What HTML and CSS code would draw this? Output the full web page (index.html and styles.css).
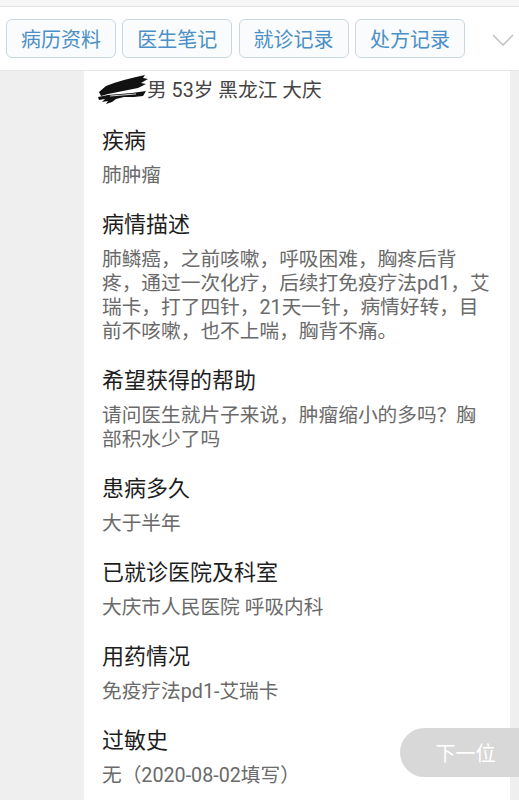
FILE: index.html
```html
<!DOCTYPE html>
<html lang="zh-CN">
<head>
<meta charset="utf-8">
<title>病历资料</title>
<link rel="stylesheet" href="styles.css">
</head>
<body>
<div class="topstrip"></div>
<nav class="tabs">
  <button class="tab">病历资料</button>
  <button class="tab">医生笔记</button>
  <button class="tab">就诊记录</button>
  <button class="tab">处方记录</button>
  <svg class="chev" width="22" height="12" viewBox="0 0 22 12"><polyline points="1,1 11,11 21,1" fill="none" stroke="#bdbdbd" stroke-width="1.4"/></svg>
</nav>
<main class="main">
  <section class="card">
    <div class="info"><svg class="scribble" width="52" height="30" viewBox="0 0 52 30"><path d="M3 17 L10 11 L18 8 L28 5 L40 2 L49 0 L47 3 L52 4 L45 8 L50 9 L42 13 L32 15 L22 17 L12 19 L5 21 Z" fill="#111"/><path d="M2 22 L12 20 L24 19 L36 18 L50 16 L47 21 L38 22 L28 22 L20 24 L16 27 L10 29 L12 26 L6 27 L9 24 L3 25 Z" fill="#111"/><path d="M14 21 L40 19" stroke="#fff" stroke-width="0.8"/></svg>男 53岁 黑龙江 大庆</div>

    <h2 class="label">疾病</h2>
    <p class="value">肺肿瘤</p>

    <h2 class="label">病情描述</h2>
    <p class="value">肺鳞癌，之前咳嗽，呼吸困难，胸疼后背疼，通过一次化疗，后续打免疫疗法pd1，艾瑞卡，打了四针，21天一针，病情好转，目前不咳嗽，也不上喘，胸背不痛。</p>

    <h2 class="label">希望获得的帮助</h2>
    <p class="value">请问医生就片子来说，肿瘤缩小的多吗？胸部积水少了吗</p>

    <h2 class="label">患病多久</h2>
    <p class="value">大于半年</p>

    <h2 class="label">已就诊医院及科室</h2>
    <p class="value">大庆市人民医院 呼吸内科</p>

    <h2 class="label">用药情况</h2>
    <p class="value">免疫疗法pd1-艾瑞卡</p>

    <h2 class="label">过敏史</h2>
    <p class="value">无（2020-08-02填写）</p>
  </section>
</main>
<button class="next">下一位</button>
</body>
</html>
```
FILE: styles.css
```css
* { box-sizing: border-box; }
html, body {
  margin: 0;
  padding: 0;
  height: 800px;
  overflow: hidden;
}
body {
  background: #efefef;
  font-family: Roboto, "Noto Sans CJK SC", sans-serif;
}
.topstrip {
  height: 7px;
  background: #f6f6f6;
  border-bottom: 1px solid #e4e4e4;
}
.tabs {
  height: 64px;
  background: #fff;
  border-bottom: 1px solid #e6e6e6;
  display: flex;
  align-items: center;
  padding-left: 6px;
  gap: 6.3px;
}
.tab {
  width: 110px;
  height: 39px;
  border: 1px solid #c9d7df;
  border-radius: 6px;
  background: #f9fbfc;
  color: #4a8fc6;
  font-family: Roboto, "Noto Sans CJK SC", sans-serif;
  font-size: 20px;
  padding: 0;
  display: flex;
  align-items: center;
  justify-content: center;
}
.chev {
  margin-left: 21px;
  margin-top: 2px;
}
.main {
  display: flex;
  padding: 0 9px 0 84px;
}
.card {
  flex: 1;
  background: #fff;
  padding: 8px 17px 40px 18px;
}
.info {
  font-size: 19.7px;
  line-height: 24px;
  color: #444;
  display: flex;
  align-items: center;
  margin-left: -6px;
}
.scribble {
  margin: -5px -1px -3px 0;
  flex: none;
}
.label {
  margin: 25px 0 0;
  font-size: 22px;
  line-height: 26px;
  font-weight: normal;
  color: #1e1e1e;
}
.value {
  margin: 10px 0 0;
  font-size: 19.7px;
  line-height: 24px;
  color: #6a6a6a;
}
.value + .label { margin-top: 24px; }
.next {
  position: fixed;
  right: 0;
  bottom: 23px;
  width: 119px;
  height: 49px;
  border: none;
  border-radius: 25px 0 0 25px;
  background: #d8d8d8;
  color: #fff;
  font-family: Roboto, "Noto Sans CJK SC", sans-serif;
  font-size: 20px;
  padding: 0 0 0 12px;
}
```
